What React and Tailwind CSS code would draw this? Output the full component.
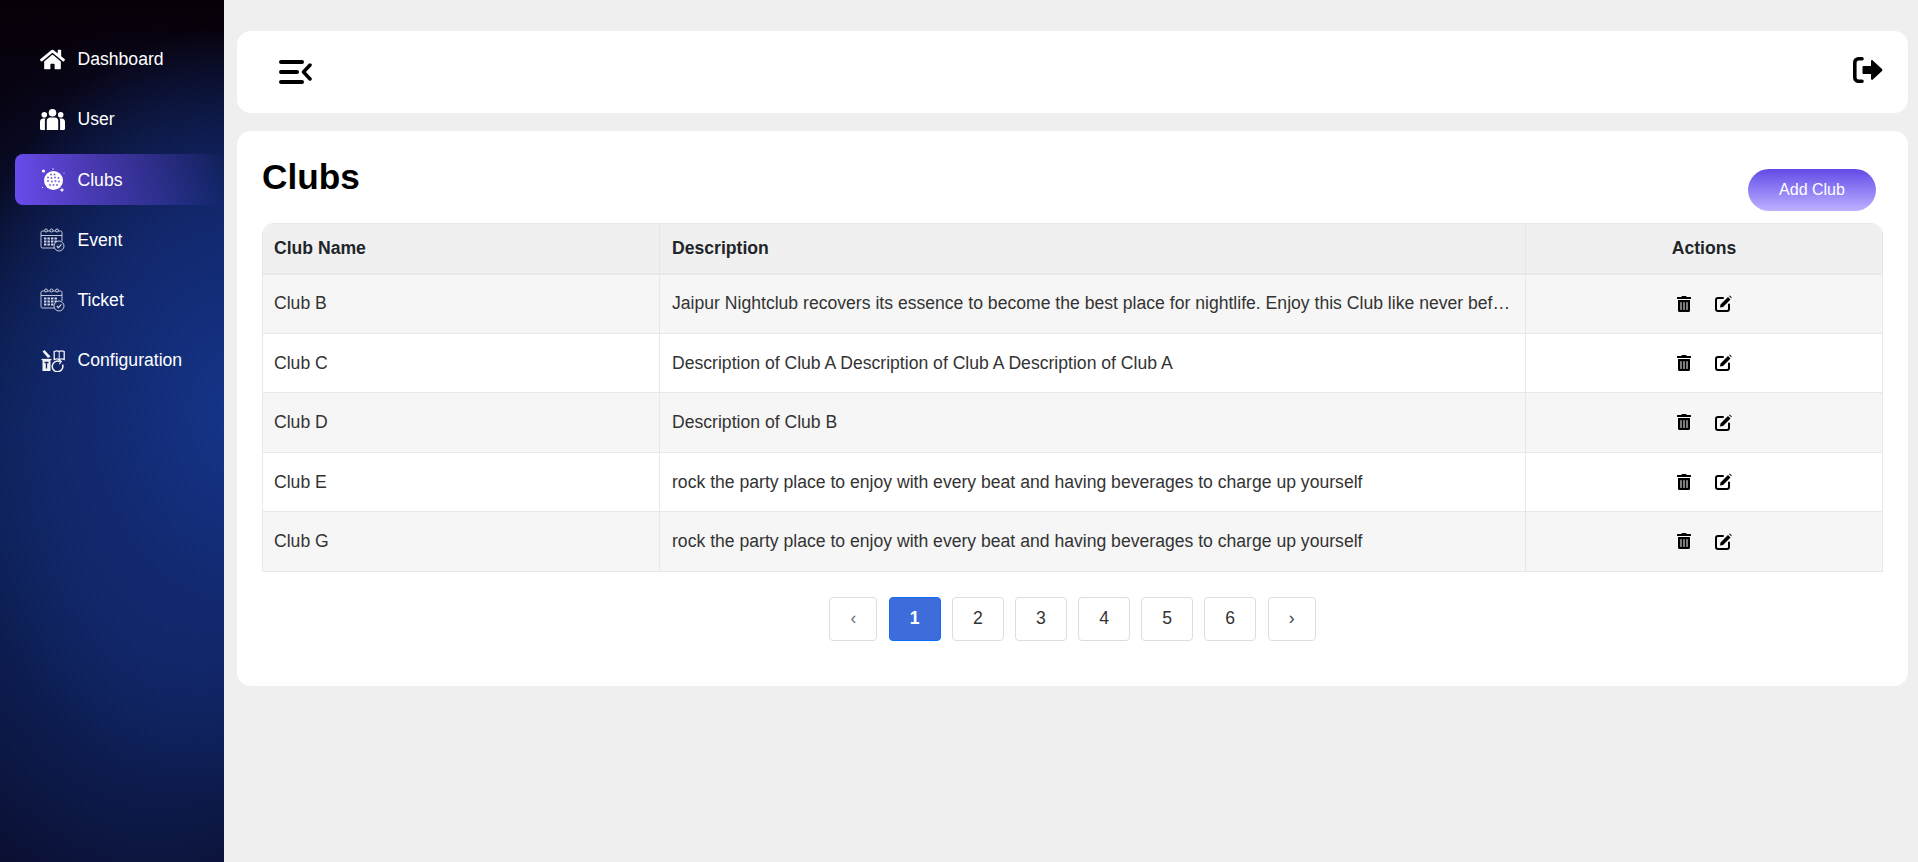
import { FaHome, FaTrashAlt } from 'react-icons/fa';

const UsersIcon = () => (
  <svg viewBox="0 0 25 21" className="h-[21px] w-[25px]" fill="#fff">
    <circle cx="12.500" cy="3.800" r="3.800" />
    <circle cx="4.300" cy="5.800" r="2.800" />
    <circle cx="20.700" cy="5.800" r="2.800" />
    <path d="M6.800 12a3.500 3.500 0 0 1 3.500-3.500h4.400a3.500 3.500 0 0 1 3.500 3.500v9H6.800z" />
    <path d="M5.500 9.500c-.4.700-.6 1.500-.6 2.400V21H1.500A1.500 1.500 0 0 1 0 19.500V13a3.500 3.500 0 0 1 3.500-3.500z" />
    <path d="M19.500 9.500c.4.700.6 1.500.6 2.400V21h3.400a1.500 1.500 0 0 0 1.500-1.500V13a3.500 3.500 0 0 0-3.500-3.500z" />
  </svg>
);

const DiscoIcon = () => (
  <svg viewBox="0 0 24 24" className="h-[24px] w-[24px]" fill="#fff">
    <circle cx="12.500" cy="12.500" r="9.500" />
    <g fill="#6a52d8">
      {[
        [10, 6.500], [13.500, 6.500], [7, 9.500], [10.500, 10], [14, 9.500], [17.500, 10],
        [7, 13], [11, 13.500], [14.500, 13], [18, 13.500], [9, 17], [12.500, 17], [16, 17],
      ].map(([x, y]) => (
        <rect key={`${x}-${y}`} x={x - 0.8} y={y - 0.8} width="1.600" height="1.600" />
      ))}
    </g>
    <circle cx="2.500" cy="3" r="1.600" />
    <circle cx="12" cy="1" r="0.700" />
    <path d="M21 19.500l.7 1.800 1.800.7-1.800.7-.7 1.800-.7-1.800-1.800-.7 1.800-.7z" />
    <circle cx="1.500" cy="19.500" r="0.600" />
    <circle cx="23" cy="5" r="0.500" />
  </svg>
);

const CalendarIcon = () => (
  <svg viewBox="0 0 25 24" className="h-[24px] w-[25px]" fill="none" stroke="#d5d8e6" strokeWidth="0.900">
    <path d="M18 20H2.500A1.500 1.500 0 0 1 1 18.500V4.500A1.500 1.500 0 0 1 2.500 3h18A1.500 1.500 0 0 1 22 4.500V13" />
    <path d="M1 7.500h21" />
    <circle cx="6" cy="2.500" r="1.500" fill="#14285f" />
    <circle cx="11.500" cy="2.500" r="1.500" fill="#14285f" />
    <circle cx="17" cy="2.500" r="1.500" fill="#14285f" />
    <g fill="#d5d8e6" stroke="none">
      {[4, 7.500, 11, 14.500].flatMap((x) =>
        [9.500, 12.500, 15.500].map((y) => <rect key={`${x}-${y}`} x={x} y={y} width="2.400" height="2" />)
      )}
    </g>
    <circle cx="19" cy="18" r="5" fill="#14285f" />
    <path d="M16.800 18l1.600 1.600 3-3.200" strokeWidth="1.100" />
  </svg>
);

const ConfigIcon = () => (
  <svg viewBox="0 0 24 23" className="h-[23px] w-[24px]" fill="none" stroke="#f1f2f8" strokeWidth="1.500">
    <path d="M1.500 2.500l2-1.500 6 6.500-2.500 1.500z" fill="#f1f2f8" stroke="none" />
    <path d="M13.200 2.500c2-1 3.500-1 5 0 1.500-1 3-1 5 0v8c-2-1-3.500-1-5 0-1.500-1-3-1-5 0z" strokeWidth="1.300" />
    <path d="M18.200 2.500v8" strokeWidth="1" />
    <path d="M1.500 11h8v11h-8z" fill="#f1f2f8" stroke="none" />
    <path d="M0.500 10.500h10" strokeWidth="1.300" />
    <path d="M3.500 13.500h4M5.500 13.500v6" stroke="#14285f" strokeWidth="1.300" />
    <path d="M21.500 15.500a5.300 5.300 0 1 1-2.500-2.800" />
    <path d="M17.500 10.500l2.800 2-2 2.600" strokeWidth="1.200" />
  </svg>
);

const MenuFoldIcon = () => (
  <svg viewBox="0 0 33 24" className="h-[24px] w-[33px]" fill="none" stroke="#000" strokeLinecap="round" strokeLinejoin="round">
    <path d="M2 2h21M2 12h16M2 22h21" strokeWidth="4" />
    <path d="M31 5l-6.500 7 6.500 7" strokeWidth="3.500" />
  </svg>
);

const LogoutIcon = () => (
  <svg viewBox="0 0 30 26" className="mb-[4px] h-[26px] w-[30px]">
    <path d="M9 1.800H5.500A3.700 3.700 0 0 0 1.800 5.500v15a3.700 3.700 0 0 0 3.700 3.700H9" fill="none" stroke="#000" strokeWidth="3.600" strokeLinecap="round" />
    <path d="M9.500 10a1 1 0 0 1 1-1H18V4.200c0-1 1.100-1.500 1.800-.8l9.200 8.700c.5.500.5 1.300 0 1.800l-9.200 8.700c-.7.700-1.800.2-1.800-.8V17h-7.500a1 1 0 0 1-1-1z" fill="#000" />
  </svg>
);

const EditIcon = () => (
  <svg viewBox="0 0 17 17" className="h-[17px] w-[17px]" fill="none">
    <path d="M8 3H3a2 2 0 0 0-2 2v9a2 2 0 0 0 2 2h9a2 2 0 0 0 2-2V9.500" stroke="#000" strokeWidth="2" strokeLinecap="round" />
    <path d="M5.500 9.500L13 2l2.500 2.500L8 12l-3 .5zM14 1l.8-.6 2 2-.6.9z" fill="#000" />
  </svg>
);

const NAV = [
  { label: 'Dashboard', icon: <FaHome className="text-[25px] text-white" /> },
  { label: 'User', icon: <UsersIcon /> },
  { label: 'Clubs', icon: <DiscoIcon />, active: true },
  { label: 'Event', icon: <CalendarIcon /> },
  { label: 'Ticket', icon: <CalendarIcon /> },
  { label: 'Configuration', icon: <ConfigIcon /> },
];

const CLUBS = [
  { name: 'Club B', desc: 'Jaipur Nightclub recovers its essence to become the best place for nightlife. Enjoy this Club like never before with our amazing events.' },
  { name: 'Club C', desc: 'Description of Club A Description of Club A Description of Club A' },
  { name: 'Club D', desc: 'Description of Club B' },
  { name: 'Club E', desc: 'rock the party place to enjoy with every beat and having beverages to charge up yourself' },
  { name: 'Club G', desc: 'rock the party place to enjoy with every beat and having beverages to charge up yourself' },
];

export default function App() {
  return (
    <div className="flex min-h-screen bg-[#efefef] font-['Liberation_Sans',Arial,sans-serif] text-[17.6px]">
      {/* Sidebar */}
      <aside className="h-screen w-[224px] shrink-0 bg-[repeating-linear-gradient(112deg,rgba(0,0,20,0.025)_0_3px,transparent_3px_8px),radial-gradient(ellipse_130%_45%_at_105%_48%,#15348a_0%,#12296f_50%,transparent_100%),radial-gradient(ellipse_130%_60%_at_70%_62%,#10286a_0%,transparent_100%),linear-gradient(to_bottom,#080008_0%,#07061a_20%,#0a1b46_50%,#0a1238_80%,#0a0a26_100%)] pl-[15px] pt-[34px]">
        <nav className="flex flex-col gap-[9.2px]">
          {NAV.map(({ label, icon, active }) => (
            <a
              key={label}
              className={`flex h-[51px] items-center gap-[12.5px] rounded-l-[8px] pl-[25px] text-white ${
                active ? 'bg-gradient-to-r from-[#6a4bed] to-transparent' : ''
              }`}
            >
              <span className="flex w-[25px] justify-center">{icon}</span>
              {label}
            </a>
          ))}
        </nav>
      </aside>

      <div className="flex min-w-0 flex-1 flex-col pl-[13px] pr-[10px] pt-[31px]">
        {/* Top bar */}
        <header className="flex h-[82px] items-center justify-between rounded-[14px] bg-white pl-[42px] pr-[25px]">
          <MenuFoldIcon />
          <LogoutIcon />
        </header>

        {/* Clubs card */}
        <main className="mt-[18px] rounded-[14px] bg-white px-[25px] pb-[45px] pt-[27px]">
          <div className="flex items-start justify-between">
            <h1 className="text-[35.2px] font-bold leading-[38px] text-black">Clubs</h1>
            <button className="mr-[7px] mt-[11px] h-[42px] w-[128px] rounded-full bg-gradient-to-b from-[#6348e6] to-[#c0afff] text-[16px] text-white">
              Add Club
            </button>
          </div>

          <div className="mt-[12px] overflow-hidden rounded-t-[12px]">
            <table className="w-full table-fixed border-collapse text-[#333]">
              <colgroup>
                <col className="w-[397px]" />
                <col className="w-[866px]" />
                <col />
              </colgroup>
              <thead>
                <tr className="h-[50px] border border-b-2 border-[#e6e9ec] bg-[#f0f0f1] text-[#212529]">
                  <th className="border-x border-[#e6e6e8] px-[11px] text-left font-bold">Club Name</th>
                  <th className="border-x border-[#e6e6e8] px-[12px] text-left font-bold">Description</th>
                  <th className="border-x border-[#e6e6e8] px-[11px] text-center font-bold">Actions</th>
                </tr>
              </thead>
              <tbody>
                {CLUBS.map(({ name, desc }, i) => (
                  <tr key={name} className={`h-[59.5px] ${i % 2 === 0 ? 'bg-[#f6f6f6]' : 'bg-white'}`}>
                    <td className="border border-[#e6e8ea] px-[11px]">{name}</td>
                    <td className="truncate border border-[#e6e8ea] px-[12px]">{desc}</td>
                    <td className="border border-[#e6e8ea] px-[11px]">
                      <div className="flex items-center justify-center gap-[23px] text-black">
                        <FaTrashAlt className="text-[16px]" />
                        <EditIcon />
                      </div>
                    </td>
                  </tr>
                ))}
              </tbody>
            </table>
          </div>

          {/* Pagination */}
          <div className="mt-[25px] flex justify-center gap-[11.6px]">
            <button className="h-[44px] w-[48px] rounded-[4px] border border-[#dcdde0] pb-[1px] text-[#6c757d]">‹</button>
            <button className="h-[44px] w-[51.5px] rounded-[4px] border border-[#0d6efd] bg-[#3e6cdb] pb-[1px] font-bold text-white">1</button>
            {[2, 3, 4, 5, 6].map((n) => (
              <button key={n} className="h-[44px] w-[51.5px] rounded-[4px] border border-[#dcdde0] pb-[1px] text-[#333]">
                {n}
              </button>
            ))}
            <button className="h-[44px] w-[48px] rounded-[4px] border border-[#dcdde0] pb-[1px] text-[#444]">›</button>
          </div>
        </main>
      </div>
    </div>
  );
}
